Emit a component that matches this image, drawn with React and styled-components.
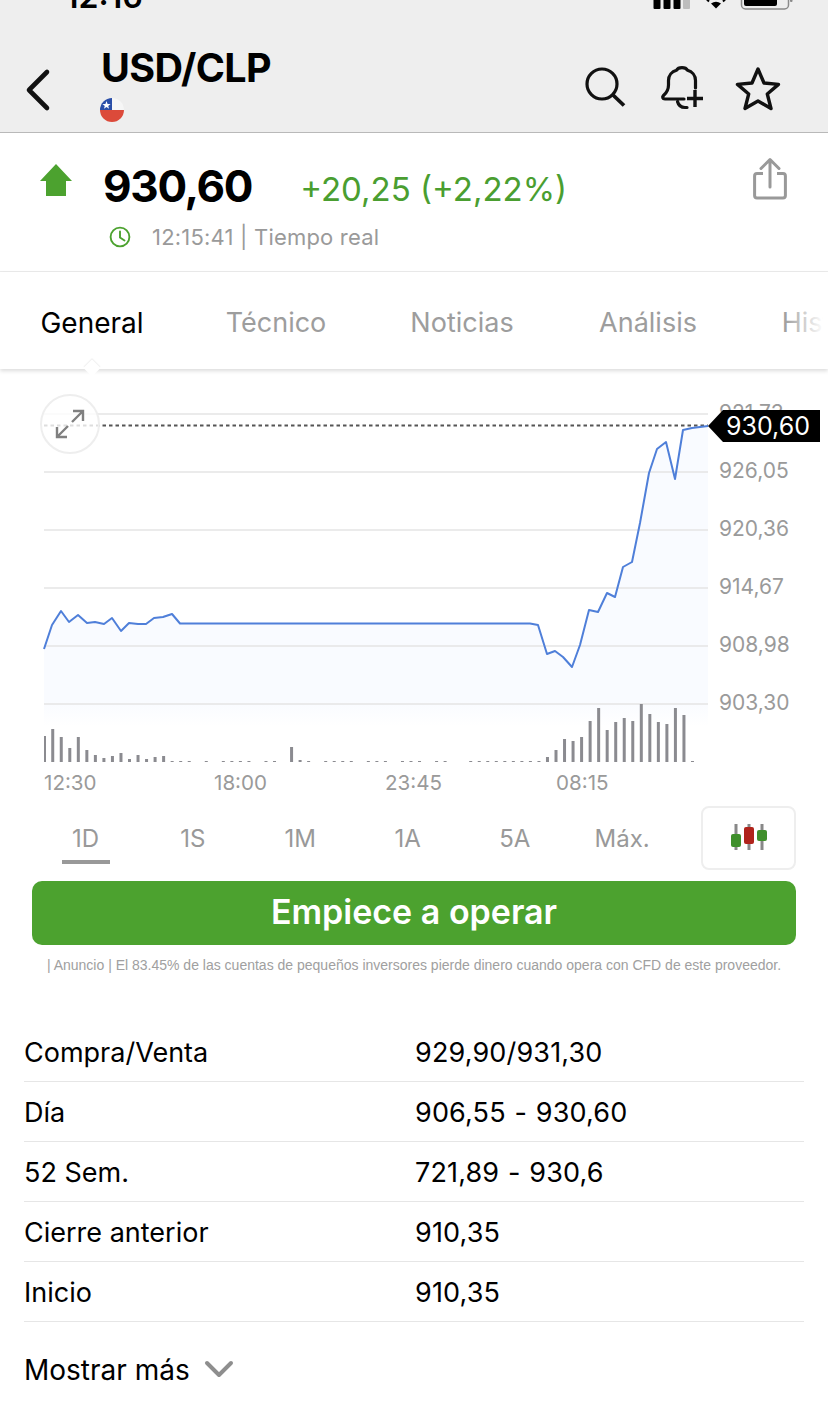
import React from "react";
import styled, { createGlobalStyle } from "styled-components";

const GlobalStyle = createGlobalStyle`
  html, body {
    margin: 0;
    padding: 0;
    background: #fff;
    font-family: Inter, "Liberation Sans", sans-serif;
    color: #000;
  }
`;

const Page = styled.div`
  width: 828px;
  height: 1412px;
  overflow: hidden;
  background: #fff;
`;

/* top bar */
const Header = styled.header`
  height: 132px;
  background: #eeeeee;
  border-bottom: 1px solid #b9b9b9;
`;

const StatusBar = styled.div`
  height: 10px;
  overflow: hidden;
  display: flex;
  align-items: flex-end;
  padding-left: 65px;
`;

const Clock = styled.span`
  font-size: 32px;
  font-weight: 600;
  line-height: 32px;
  margin-bottom: -3px;
  flex: none;
`;

const StatusIcons = styled.svg`
  margin-left: auto;
  flex: none;
`;

const Nav = styled.div`
  height: 122px;
  display: flex;
  align-items: flex-start;
`;

const BackIcon = styled.svg`
  margin: 58px 49px 0 24px;
  flex: none;
`;

const TitleBlock = styled.div`
  padding-top: 34px;
`;

const Title = styled.h1`
  margin: 0;
  font-size: 39.5px;
  line-height: 48px;
  font-weight: 700;
  letter-spacing: -0.6px;
`;

const Flag = styled.svg`
  display: block;
  margin-top: 6px;
  margin-left: -1px;
`;

const NavActions = styled.div`
  margin-left: auto;
  padding: 56px 47px 0 0;
  display: flex;
  align-items: flex-start;
  gap: 31px;
`;

/* quote */
const Quote = styled.section`
  height: 138px;
  border-bottom: 1px solid #ececec;
`;

const QuoteMain = styled.div`
  display: flex;
  align-items: flex-start;
  padding: 24px 41px 0 40px;
  height: 66px;
`;

const UpArrow = styled.svg`
  margin: 7px 31px 0 0;
  flex: none;
`;

const Price = styled.div`
  font-size: 44px;
  font-weight: 700;
  line-height: 58px;
  margin-right: 48px;
  letter-spacing: -1.3px;
`;

const Change = styled.div`
  font-size: 33px;
  line-height: 40px;
  padding-top: 12px;
  color: #4a9e30;
`;

const ShareIcon = styled.svg`
  margin-left: auto;
  flex: none;
`;

const QuoteMeta = styled.div`
  display: flex;
  align-items: center;
  padding: 0 0 0 109px;
  gap: 21px;
  font-size: 22px;
  line-height: 28px;
  letter-spacing: 0.2px;
  color: #9a9a9a;
`;

/* section tabs */
const Tabs = styled.nav`
  position: relative;
  height: 97px;
  box-shadow: 0 2px 4px rgba(0, 0, 0, 0.14);
  background: #fff;

  &::after {
    content: "";
    position: absolute;
    left: 86px;
    bottom: -5px;
    width: 12px;
    height: 12px;
    background: #fff;
    transform: rotate(45deg);
    box-shadow: -1px -1px 1px rgba(0, 0, 0, 0.06);
  }
`;

const TabStrip = styled.div`
  height: 97px;
  display: flex;
  align-items: center;
  overflow: hidden;
  position: relative;
  z-index: 1;
  padding-top: 4px;
  box-sizing: border-box;
`;

const Tab = styled.div`
  flex: 0 0 186px;
  margin-left: ${(p) => (p.$active ? "-1px" : "0")};
  margin-right: ${(p) => (p.$active ? "-2px" : "0")};
  text-align: center;
  font-size: ${(p) => (p.$active ? "28px" : "27px")};
  line-height: 36px;
  color: ${(p) => (p.$active ? "#000" : "#9d9d9d")};
`;

const TabFade = styled.div`
  position: absolute;
  right: 0;
  top: 0;
  bottom: 0;
  width: 44px;
  background: linear-gradient(to right, rgba(255, 255, 255, 0), #fff 90%);
`;

/* chart */
const ChartArea = styled.section`
  position: relative;
  height: 436px;
  margin-top: 1px;
`;

const ChartSvg = styled.svg`
  display: block;
`;

const AxisLabel = styled.text`
  font-family: Inter, "Liberation Sans", sans-serif;
  font-size: ${(p) => p.$size || 21}px;
  fill: ${(p) => p.$fill || "#9a9a9a"};
`;

const ExpandButton = styled.div`
  position: absolute;
  left: 40px;
  top: 24px;
  width: 60px;
  height: 60px;
  box-sizing: border-box;
  border-radius: 50%;
  border: 2px solid #eeeeee;
  background: rgba(255, 255, 255, 0.8);
  display: flex;
  align-items: center;
  justify-content: center;
`;

const RangeRow = styled.div`
  height: 64px;
  display: flex;
  align-items: stretch;
  padding: 0 32px;
  box-sizing: border-box;
`;

const RangeItem = styled.div`
  flex: 0 0 107.3px;
  display: flex;
  justify-content: center;
  position: relative;
  font-size: 24px;
  line-height: 32px;
  padding-top: 17px;
  box-sizing: border-box;
  color: #999;

  ${(p) =>
    p.$active &&
    `
    &::after {
      content: "";
      position: absolute;
      left: 30px;
      bottom: 6px;
      width: 48px;
      height: 4px;
      background: #999;
    }
  `}
`;

const CandleToggle = styled.div`
  margin-left: auto;
  width: 95px;
  box-sizing: border-box;
  border: 2px solid #eeeeee;
  border-radius: 8px;
  display: flex;
  align-items: center;
  justify-content: center;
`;

const TradeButton = styled.button`
  display: block;
  width: 764px;
  height: 64px;
  margin: 11px 32px 0;
  padding: 0 0 3px;
  border: 0;
  border-radius: 10px;
  background: #4ca22f;
  color: #fff;
  font-family: Inter, "Liberation Sans", sans-serif;
  font-size: 34px;
  font-weight: 600;
`;

const Disclaimer = styled.p`
  margin: 12px 0 0;
  text-align: center;
  font-family: "Liberation Sans", Arial, sans-serif;
  font-size: 14px;
  line-height: 16px;
  color: #a0a0a0;
`;

/* key figures */
const Figures = styled.div`
  margin: 49px 24px 0;
`;

const FigureRow = styled.div`
  height: 60px;
  padding-top: 1px;
  box-sizing: border-box;
  border-bottom: 1px solid #e6e6e6;
  display: grid;
  grid-template-columns: 391px 1fr;
  align-items: center;
  font-size: 27px;
`;

const FigureValue = styled.span`
  letter-spacing: 0.15px;
  word-spacing: 1px;
`;

const ShowMore = styled.div`
  display: flex;
  align-items: center;
  gap: 14px;
  margin: 30px 0 0 24px;
  font-size: 28px;
  line-height: 36px;
`;

const tabs = ["General", "Técnico", "Noticias", "Análisis", "Historial"];
const ranges = ["1D", "1S", "1M", "1A", "5A", "Máx."];
const figures = [
  ["Compra/Venta", "929,90/931,30"],
  ["Día", "906,55 - 930,60"],
  ["52 Sem.", "721,89 - 930,6"],
  ["Cierre anterior", "910,35"],
  ["Inicio", "910,35"],
];

const gridLines = [414, 472, 530, 588, 646, 704];
const priceLabels = [
  ["921,73", 414],
  ["926,05", 472],
  ["920,36", 530],
  ["914,67", 588],
  ["908,98", 646],
  ["903,30", 704],
];
const timeLabels = [
  ["12:30", 44],
  ["18:00", 214],
  ["23:45", 385],
  ["08:15", 556],
];

const line = [
  [44, 649], [52, 625], [61, 611], [69, 622], [78, 615], [87, 623], [95, 622],
  [104, 624], [112, 618], [121, 631], [129, 623], [138, 624], [146, 624],
  [154, 618], [163, 617], [172, 614], [180, 623.5], [530, 623.5], [538, 625],
  [547, 654], [555, 651], [563, 657], [572, 667], [580, 645], [589, 610],
  [598, 612], [607, 593], [615, 597], [623, 567], [632, 562], [640, 523],
  [649, 473], [657, 449], [666, 442], [675, 479], [683, 430], [692, 428],
  [708, 426],
];
const linePoints = line.map((p) => p.join(",")).join(" ");
const areaPoints = `44,726 ${linePoints} 708,726`;

// volume per 15 min bucket
const volumes = [
  26, 33, 25, 14, 25, 12, 7, 4, 6, 9, 3, 7, 3, 5, 6, 1, 1, 1, 0, 1, 0, 1, 1, 1,
  1, 0, 1, 1, 0, 15, 2, 1, 0, 1, 1, 1, 1, 0, 1, 1, 1, 0, 1, 1, 1, 0, 1, 1, 0, 0,
  1, 1, 1, 1, 1, 1, 1, 1, 1, 5, 12, 23, 21, 25, 41, 54, 32, 40, 44, 41, 58, 48,
  40, 38, 54, 47, 1,
];

const App = () => (
  <Page>
    <GlobalStyle />
    <Header>
      <StatusBar>
        <Clock>12:16</Clock>
        <StatusIcons width="178" height="10" viewBox="650 0 178 10">
          <rect x="653.5" y="-4" width="7" height="13" rx="1" fill="#000" />
          <rect x="663.5" y="-4" width="7" height="13" rx="1" fill="#000" />
          <rect x="673.5" y="-4" width="7" height="13" rx="1" fill="#000" />
          <rect x="683" y="-4" width="7" height="13" rx="1" fill="#bdbdbd" />
          <path d="M711 3.5 L716 8.5 L721 3.5 Q716 0 711 3.5 Z" fill="#000" />
          <path d="M706.5 -1 L709 1.5 M725.5 -1 L723 1.5" stroke="#000" strokeWidth="2" />
          <rect x="741.5" y="-10" width="47" height="19" rx="4" fill="none" stroke="#8a8a8a" strokeWidth="1.5" />
          <rect x="744" y="-8" width="33" height="14" rx="2" fill="#000" />
          <rect x="790" y="-3" width="2.5" height="5" rx="1" fill="#8a8a8a" />
        </StatusIcons>
      </StatusBar>
      <Nav>
        <BackIcon width="28" height="44" viewBox="0 0 28 44">
          <path d="M23 4 L5 22 L23 40" fill="none" stroke="#111" strokeWidth="4.6" strokeLinecap="round" strokeLinejoin="round" />
        </BackIcon>
        <TitleBlock>
          <Title>USD/CLP</Title>
          <Flag width="24" height="24" viewBox="0 0 24 24">
            <clipPath id="flag-disc">
              <circle cx="12" cy="12" r="12" />
            </clipPath>
            <g clipPath="url(#flag-disc)">
              <rect width="24" height="12" fill="#f6f6f6" />
              <rect y="12" width="24" height="12" fill="#dc4a3a" />
              <rect width="12" height="12" fill="#2b4fa8" />
              <path d="M6.5 3 L7.6 6 L10.6 6 L8.2 7.9 L9.1 10.8 L6.5 9 L3.9 10.8 L4.8 7.9 L2.4 6 L5.4 6 Z" fill="#fff" />
            </g>
          </Flag>
        </TitleBlock>
        <NavActions>
          <svg width="44" height="44" viewBox="0 0 44 44" fill="none" stroke="#111" strokeWidth="3.2" strokeLinecap="round">
            <circle cx="17" cy="18" r="15" />
            <path d="M28 29 L39 39.5" strokeWidth="3.8" strokeLinecap="butt" />
          </svg>
          <svg width="44" height="44" viewBox="0 0 44 44" fill="none" stroke="#111" strokeWidth="3.2" strokeLinecap="round" strokeLinejoin="round">
            <path d="M24 33 H5 C2.5 33 2 31 3.5 29.5 C7 26.5 8.5 23 8.5 19 V14.5 C8.5 9.5 12 5.5 16.5 4.3 C17.5 2.5 19.5 1.7 22 1.7 C24.5 1.7 26.5 2.5 27.5 4.3 C32 5.5 35.5 9.5 35.5 14.5 V22" />
            <path d="M17.5 35.5 C18.5 39.5 21 41.5 25 41.5 H27" />
            <path d="M35 24 V41 M27 32.5 H43" strokeWidth="3.4" strokeLinecap="butt" />
          </svg>
          <svg width="46" height="46" viewBox="0 0 46 46" fill="none" stroke="#111" strokeWidth="3.4" strokeLinejoin="round">
            <path d="M23 3 L29 17 L43.5 18.4 L32.3 28 L36 42.5 L23 35 L10 42.5 L13.7 28 L2.5 18.4 L17 17 Z" />
          </svg>
        </NavActions>
      </Nav>
    </Header>

    <Quote>
      <QuoteMain>
        <UpArrow width="32" height="32" viewBox="0 0 32 32">
          <path d="M16 0 L32 17 H26 V32 H6 V17 H0 Z" fill="#4ca22f" />
        </UpArrow>
        <Price>930,60</Price>
        <Change>+20,25 (+2,22%)</Change>
        <ShareIcon width="34" height="44" viewBox="0 0 34 44" fill="none" stroke="#999" strokeWidth="3">
          <path d="M17 30 V3 M8 11.5 L17 2.5 L26 11.5" strokeLinecap="round" strokeLinejoin="round" />
          <path d="M10 16.5 H4 C2.6 16.5 1.6 17.5 1.6 19 V38.5 C1.6 40 2.6 41 4 41 H30 C31.4 41 32.4 40 32.4 38.5 V19 C32.4 17.5 31.4 16.5 30 16.5 H24" />
        </ShareIcon>
      </QuoteMain>
      <QuoteMeta>
        <svg width="22" height="22" viewBox="0 0 22 22" fill="none" stroke="#4ca22f" strokeWidth="1.9">
          <circle cx="11" cy="11" r="9.4" />
          <path d="M11 5.5 V11.5 L15.5 14.5" strokeLinecap="round" />
        </svg>
        <span>12:15:41 | Tiempo real</span>
      </QuoteMeta>
    </Quote>

    <Tabs>
      <TabStrip>
        {tabs.map((name, i) => (
          <Tab key={name} $active={i === 0}>
            {name}
          </Tab>
        ))}
        <TabFade />
      </TabStrip>
    </Tabs>

    <ChartArea>
      <ChartSvg width="828" height="436" viewBox="0 370 828 436">
        <defs>
          <linearGradient id="area-fill" gradientUnits="userSpaceOnUse" x1="0" y1="420" x2="0" y2="726">
            <stop offset="0" stopColor="#f9fbff" />
            <stop offset="0.92" stopColor="#f9fbff" />
            <stop offset="1" stopColor="#ffffff" />
          </linearGradient>
        </defs>
        <polygon points={areaPoints} fill="url(#area-fill)" />
        {gridLines.map((y) => (
          <line key={y} x1="44" x2="708" y1={y} y2={y} stroke="#e4e4e4" strokeWidth="1.6" />
        ))}
        <line x1="44" x2="708" y1="425.5" y2="425.5" stroke="#555" strokeWidth="2" strokeDasharray="3.5 3" />
        {volumes.map((h, i) =>
          h > 0 ? (
            <rect
              key={i}
              x={i === 0 ? 44 : 42.7 + i * 8.53}
              y={762 - h}
              width={i === 0 ? 2 : 3}
              height={h}
              fill="#8b8b90"
            />
          ) : null
        )}
        <polyline points={linePoints} fill="none" stroke="#4f7fd9" strokeWidth="2" strokeLinejoin="round" />
        {priceLabels.map(([label, y]) => (
          <AxisLabel key={label} x="719" y={y + 6}>
            {label}
          </AxisLabel>
        ))}
        {timeLabels.map(([label, x]) => (
          <AxisLabel key={label} x={x} y="790" $size={20.6}>
            {label}
          </AxisLabel>
        ))}
        <path d="M708 426 L723 410 H820 V442 H723 Z" fill="#000" />
        <AxisLabel x="726" y="435" $size={25} $fill="#fff">
          930,60
        </AxisLabel>
      </ChartSvg>
      <ExpandButton>
        <svg width="30" height="30" viewBox="0 0 30 30" fill="none" stroke="#808080" strokeWidth="2.4">
          <path d="M17 13 L28 2 M18 2 H28 V12" />
          <path d="M13 17 L2 28 M2 18 V28 H12" />
        </svg>
      </ExpandButton>
    </ChartArea>

    <RangeRow>
      {ranges.map((r, i) => (
        <RangeItem key={r} $active={i === 0}>
          {r}
        </RangeItem>
      ))}
      <CandleToggle>
        <svg width="38" height="28" viewBox="0 0 38 28">
          <path d="M6 0 V26 M19 0 V26 M32 0 V26" stroke="#888" strokeWidth="3" />
          <rect x="1" y="10" width="10" height="13" rx="2" fill="#3f8f2c" />
          <rect x="14" y="3" width="10" height="17" rx="2" fill="#b0241c" />
          <rect x="27" y="6" width="10" height="11" rx="2" fill="#3f8f2c" />
        </svg>
      </CandleToggle>
    </RangeRow>

    <TradeButton>Empiece a operar</TradeButton>
    <Disclaimer>| Anuncio | El 83.45% de las cuentas de pequeños inversores pierde dinero cuando opera con CFD de este proveedor.</Disclaimer>

    <Figures>
      {figures.map(([label, value]) => (
        <FigureRow key={label}>
          <span>{label}</span>
          <FigureValue>{value}</FigureValue>
        </FigureRow>
      ))}
    </Figures>

    <ShowMore>
      <span>Mostrar más</span>
      <svg width="30" height="20" viewBox="0 0 30 20" fill="none" stroke="#8e8e8e" strokeWidth="4" strokeLinecap="round" strokeLinejoin="round">
        <path d="M3 3 L15 15 L27 3" />
      </svg>
    </ShowMore>
  </Page>
);

export default App;
